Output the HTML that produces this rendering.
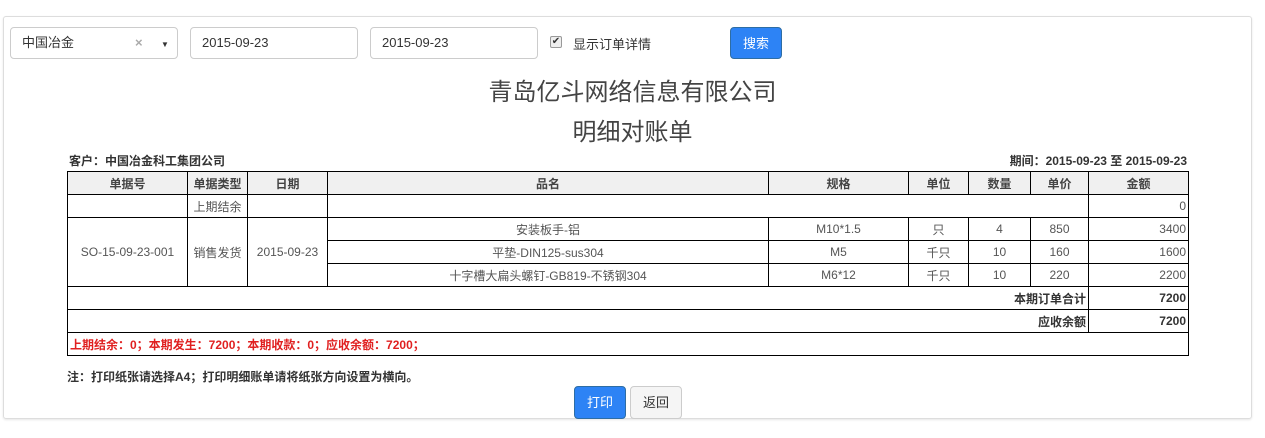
<!DOCTYPE html>
<html><head><meta charset="utf-8"><style>
*{box-sizing:border-box;margin:0;padding:0}
body{width:1265px;height:438px;background:#fff;font-family:"Liberation Sans","Noto Sans CJK SC",sans-serif;font-size:12px;color:#333;position:relative;overflow:hidden}
.panel{position:absolute;left:3px;top:16px;width:1249px;height:403px;border:1px solid #ddd;border-radius:3px;box-shadow:0 1px 2px rgba(0,0,0,.1)}
.inp{position:absolute;top:27px;height:32px;border:1px solid #ccc;border-radius:4px;padding:6px 11px;font-size:13px;line-height:18px;color:#333;background:#fff}
.btn{position:absolute;border-radius:4px;font-size:13px;text-align:center;line-height:31px;height:33px}
.blue{background:#2d83f5;color:#fff;border:1px solid #2e6da4}
.t{position:absolute;left:0;width:100%;text-align:center;color:#444}
table{position:absolute;left:67px;top:171px;width:1122px;border-collapse:collapse;font-size:12px}
td,th{border:1px solid #000;height:23px;text-align:center;color:#555;font-weight:normal;padding:0 2px}
th{background:#f0f0f0;font-weight:bold;color:#444}
.r{text-align:right}
.b{font-weight:bold;color:#333}
</style></head><body>
<div class="panel"></div>
<div class="inp" style="left:10px;width:168px">中国冶金<span style="position:absolute;left:124px;top:6px;color:#aaa;font-weight:bold">×</span><span style="position:absolute;left:150px;top:8px;font-size:8px">▼</span></div>
<div class="inp" style="left:190px;width:168px">2015-09-23</div>
<div class="inp" style="left:370px;width:168px">2015-09-23</div>
<div style="position:absolute;left:550px;top:36px;width:12px;height:12px;border:1px solid #999;border-radius:2px;background:#eee;font-size:10px;line-height:10px;text-align:center">✔</div>
<div style="position:absolute;left:573px;top:34px;font-size:13px">显示订单详情</div>
<div class="btn blue" style="left:730px;top:27px;width:52px;height:32px">搜索</div>
<div class="t" style="top:72px;font-size:24px">青岛亿斗网络信息有限公司</div>
<div class="t" style="top:112px;font-size:24px">明细对账单</div>
<div style="position:absolute;left:69px;top:152px;font-weight:bold;color:#333">客户：中国冶金科工集团公司</div>
<div style="position:absolute;right:78px;top:152px;font-weight:bold;color:#333">期间：2015-09-23 至 2015-09-23</div>
<table>
<tr><th style="width:120px">单据号</th><th style="width:60px">单据类型</th><th style="width:80px">日期</th><th style="width:441px">品名</th><th style="width:140px">规格</th><th style="width:60px">单位</th><th style="width:62px">数量</th><th style="width:58px">单价</th><th>金额</th></tr>
<tr><td></td><td>上期结余</td><td></td><td colspan="5"></td><td class="r">0</td></tr>
<tr><td rowspan="3">SO-15-09-23-001</td><td rowspan="3">销售发货</td><td rowspan="3">2015-09-23</td><td>安装板手-铝</td><td>M10*1.5</td><td>只</td><td>4</td><td>850</td><td class="r">3400</td></tr>
<tr><td>平垫-DIN125-sus304</td><td>M5</td><td>千只</td><td>10</td><td>160</td><td class="r">1600</td></tr>
<tr><td>十字槽大扁头螺钉-GB819-不锈钢304</td><td>M6*12</td><td>千只</td><td>10</td><td>220</td><td class="r">2200</td></tr>
<tr><td colspan="8" class="r b">本期订单合计</td><td class="r b">7200</td></tr>
<tr><td colspan="8" class="r b">应收余额</td><td class="r b">7200</td></tr>
<tr><td colspan="9" style="text-align:left;color:#e02020;font-weight:bold">上期结余：0；本期发生：7200；本期收款：0；应收余额：7200；</td></tr>
</table>
<div style="position:absolute;left:67px;top:368px;font-weight:bold;color:#333">注：打印纸张请选择A4；打印明细账单请将纸张方向设置为横向。</div>
<div class="btn blue" style="left:574px;top:386px;width:52px">打印</div>
<div class="btn" style="left:630px;top:386px;width:52px;border:1px solid #ccc;background:#f5f5f5;color:#333">返回</div>
</body></html>
